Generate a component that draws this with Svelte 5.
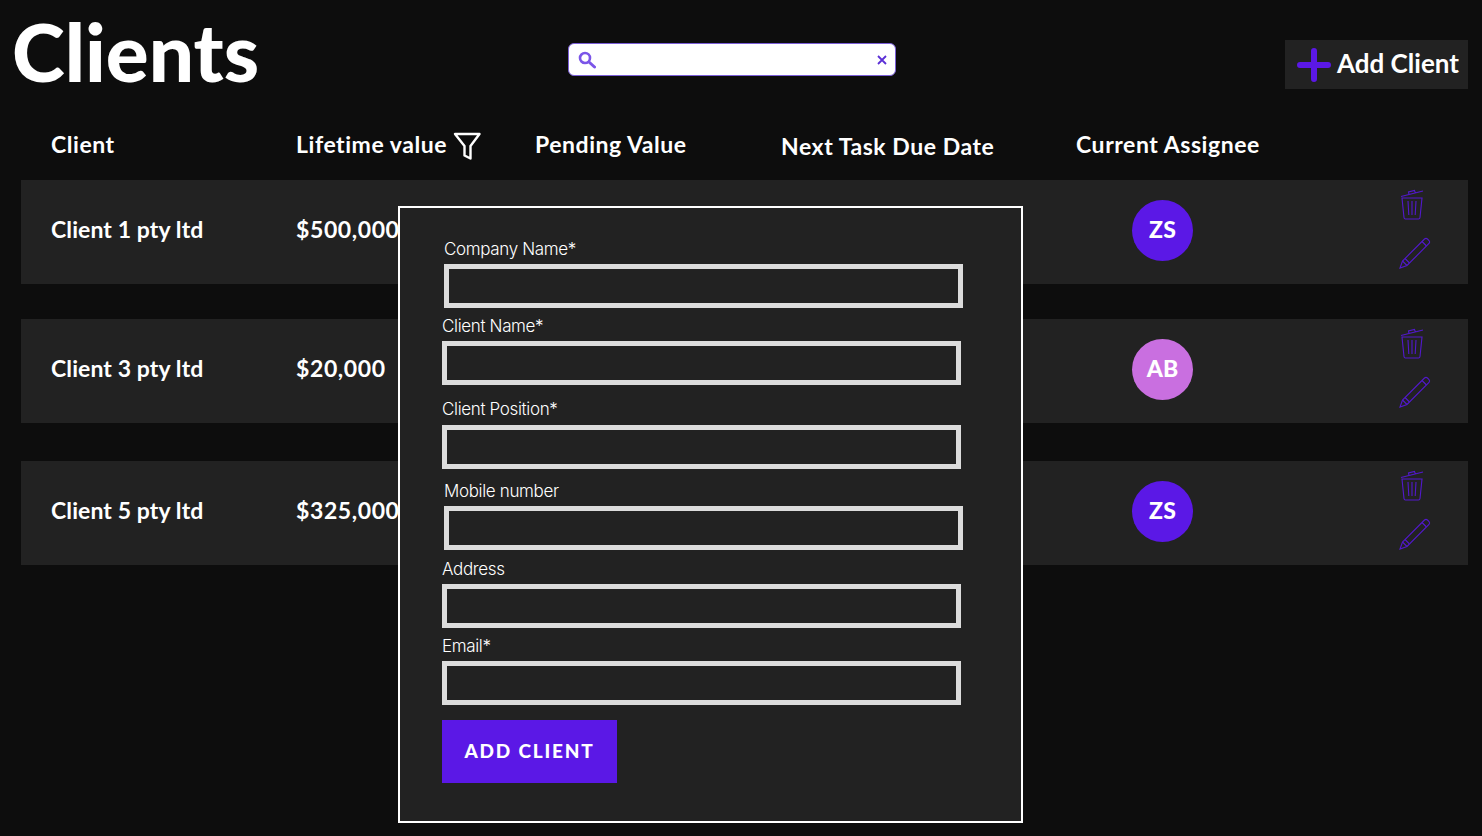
<script>
	const clients = [
		{ name: 'Client 1 pty ltd', value: '$500,000', initials: 'ZS', tone: 'violet' },
		{ name: 'Client 3 pty ltd', value: '$20,000', initials: 'AB', tone: 'pink' },
		{ name: 'Client 5 pty ltd', value: '$325,000', initials: 'ZS', tone: 'violet' }
	];

	const fields = [
		{ label: 'Company Name*', cls: 'inset' },
		{ label: 'Client Name*', cls: '' },
		{ label: 'Client Position*', cls: 'far' },
		{ label: 'Mobile number', cls: 'inset mid' },
		{ label: 'Address', cls: 'near' },
		{ label: 'Email*', cls: '' }
	];
</script>

<div class="page">
	<header class="top">
		<h1>Clients</h1>
		<div class="search">
			<svg class="glass" viewBox="0 0 18 18" width="18" height="18">
				<circle cx="7" cy="7" r="5" fill="none" stroke="#7b55e8" stroke-width="2.6" />
				<path d="M11 11l5.5 5" stroke="#7b55e8" stroke-width="3" stroke-linecap="round" />
			</svg>
			<input type="text" aria-label="Search" />
			<svg viewBox="0 0 10 10" width="10" height="10">
				<path d="M1 1l8 8M9 1l-8 8" stroke="#5b2fd6" stroke-width="1.8" />
			</svg>
		</div>
		<button class="add">
			<svg viewBox="0 0 34 34" width="34" height="34">
				<path d="M17 3v28M3 17h28" stroke="#5b18e6" stroke-width="6" stroke-linecap="round" />
			</svg>
			<span>Add Client</span>
		</button>
	</header>

	<div class="heads">
		<span>Client</span>
		<span class="with-icon">
			Lifetime value
			<svg viewBox="0 0 28 30" width="28" height="30">
				<path
					d="M2 3h24.500L17.500 15v12.500l-6 -3V15z"
					fill="none"
					stroke="#fff"
					stroke-width="2.4"
					stroke-linejoin="round"
				/>
			</svg>
		</span>
		<span>Pending Value</span>
		<span class="low">Next Task Due Date</span>
		<span>Current Assignee</span>
	</div>

	<div class="rows">
		{#each clients as c}
			<div class="row">
				<span>{c.name}</span>
				<span class="money">{c.value}</span>
				<span></span>
				<span></span>
				<span class="avatar {c.tone}">{c.initials}</span>
				<div class="actions">
					<svg class="trash" viewBox="0 0 24 32" width="24" height="32" fill="none" stroke="#5219cc" stroke-width="1.1">
						<path d="M1 8.500L23 3M9 6.500l-.5 -2.500 6 -1.500.8 2.400" />
						<path d="M2 10h20l-2 19.500q-.1 1.500 -1.500 1.500h-13q-1.400 0 -1.500 -1.500z" />
						<path d="M8 13l.8 14M12 13v14M16 13l-.8 14" />
					</svg>
					<svg class="pencil" viewBox="0 0 32 32" width="32" height="32" fill="none" stroke="#5219cc" stroke-width="1.1">
						<path d="M1 31l2.500 -7L25.500 2q1.500 -1.200 3 0l1.500 1.500q1.200 1.500 0 3L8 28.500z" />
						<path d="M3.500 24L8 28.500M23 4.500l4.500 4.500M6 21.500l4.500 4.500" />
					</svg>
				</div>
			</div>
		{/each}
	</div>

	<form class="modal">
		{#each fields as f}
			<div class="field {f.cls}">
				<label for={f.label}>{f.label}</label>
				<input id={f.label} type="text" />
			</div>
		{/each}
		<button class="submit" type="button">ADD CLIENT</button>
	</form>
</div>

<style>
	:global(body) {
		background: #0d0d0d;
		font-family: 'Lato', sans-serif;
		color: #fff;
	}
	.page {
		position: relative;
		height: 836px;
		overflow: hidden;
		padding: 0 14px 0 21px;
		box-sizing: border-box;
	}
	.top {
		display: flex;
		align-items: flex-start;
		height: 114px;
	}
	h1 {
		width: 556px;
		margin: 5px 0 0 -9px;
		font-size: 80px;
		line-height: 92px;
		font-weight: 900;
	}
	.search {
		display: flex;
		align-items: center;
		gap: 7px;
		width: 328px;
		height: 33px;
		margin-top: 43px;
		padding: 0 8px 0 9px;
		box-sizing: border-box;
		background: #fff;
		border: 1px solid #7b5fd8;
		border-radius: 6px;
	}
	.glass {
		flex: none;
	}
	.search input {
		flex: 1;
		min-width: 0;
		border: 0;
		outline: 0;
		background: none;
	}
	.add {
		display: flex;
		align-items: center;
		gap: 6px;
		width: 183px;
		height: 49px;
		margin: 40px 0 0 auto;
		padding: 0 0 0 12px;
		box-sizing: border-box;
		background: #222;
		border: 0;
		color: #fff;
		font: 700 26px 'Lato', sans-serif;
		white-space: nowrap;
	}
	.add span {
		margin-top: -3px;
	}
	.heads,
	.row {
		display: grid;
		padding-left: 30px;
		font-size: 23px;
		font-weight: 700;
	}
	.heads {
		grid-template-columns: 245px 239px 246px 295px 1fr;
		height: 66px;
		line-height: 60px;
		letter-spacing: 0.55px;
	}
	.with-icon {
		display: flex;
		align-items: center;
		gap: 6px;
		height: 60px;
	}
	.with-icon svg {
		margin-top: 4px;
	}
	.low {
		line-height: 64px;
	}
	.row {
		align-items: center;
		height: 104px;
		padding-bottom: 6px;
		box-sizing: border-box;
		background: #222;
		letter-spacing: 0.1px;
		grid-template-columns: 245px 239px 246px 295px 56px 61px 1fr;
	}
	.money {
		letter-spacing: 0.6px;
	}
	.row:nth-child(2) {
		margin-top: 35px;
	}
	.row:nth-child(3) {
		margin-top: 38px;
	}
	.avatar {
		grid-column: 6;
		display: flex;
		align-items: center;
		justify-content: center;
		width: 61px;
		height: 61px;
		margin-top: 3px;
		padding-bottom: 3px;
		box-sizing: border-box;
		border-radius: 50%;
		font-size: 23px;
		font-weight: 900;
	}
	.violet {
		background: #5b18e6;
	}
	.pink {
		background: #c96fe0;
	}
	.actions {
		display: flex;
		flex-direction: column;
		align-items: flex-end;
		gap: 17px;
		margin-top: -2px;
		padding-right: 37px;
	}
	.trash {
		margin-right: 7px;
	}
	.modal {
		position: absolute;
		left: 398px;
		top: 206px;
		display: flex;
		flex-direction: column;
		align-items: flex-start;
		gap: 6px;
		width: 625px;
		height: 617px;
		padding: 29px 0 0 42px;
		box-sizing: border-box;
		background: #222;
		border: 2px solid #fff;
		font-family: 'Inter', sans-serif;
	}
	.field {
		display: flex;
		flex-direction: column;
		gap: 3px;
	}
	.inset {
		margin-left: 2px;
	}
	.far {
		margin-top: 7px;
	}
	.far label {
		margin-top: -1px;
		margin-bottom: 1px;
	}
	.mid {
		margin-top: 4px;
	}
	.near {
		margin-top: 1px;
	}
	label {
		font-size: 17px;
		line-height: 24px;
		letter-spacing: -0.35px;
		font-weight: 300;
		color: #fff;
	}
	.field input {
		width: 519px;
		height: 44px;
		box-sizing: border-box;
		background: #222;
		border: 5px solid #dcdcdc;
		outline: 0;
	}
	.submit {
		width: 175px;
		height: 63px;
		margin-top: 9px;
		padding-bottom: 4px;
		background: #5b18e6;
		border: 0;
		color: #fff;
		font: 900 19px 'Lato', sans-serif;
		letter-spacing: 1.8px;
	}
</style>
